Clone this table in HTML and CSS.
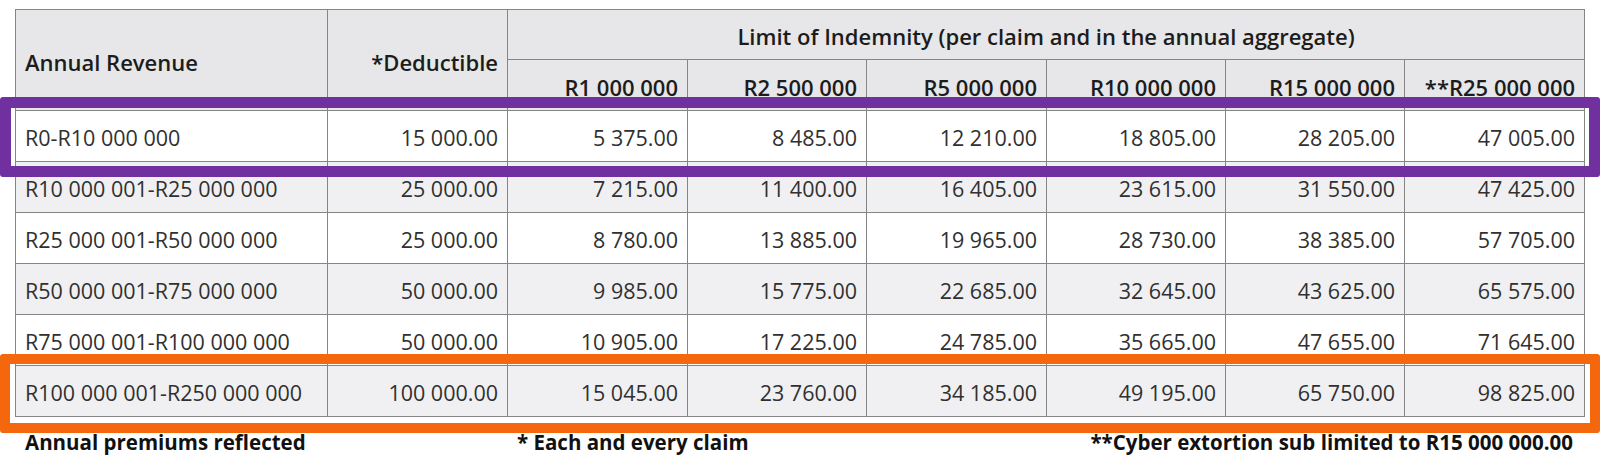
FILE: index.html
```html
<!DOCTYPE html>
<html lang="en">
<head>
<meta charset="utf-8">
<title>Cyber premiums</title>
<link rel="stylesheet" href="styles.css">
</head>
<body>
<div class="page">
  <table class="rates">
    <colgroup>
      <col class="c-rev">
      <col class="c-ded">
      <col class="c-a">
      <col class="c-b">
      <col class="c-a">
      <col class="c-b">
      <col class="c-b">
      <col class="c-a">
    </colgroup>
    <thead>
      <tr class="hr1">
        <th rowspan="2" class="left">Annual Revenue</th>
        <th rowspan="2" class="right">*Deductible</th>
        <th colspan="6" class="center">Limit of Indemnity (per claim and in the annual aggregate)</th>
      </tr>
      <tr class="hr2">
        <th class="right">R1 000 000</th>
        <th class="right">R2 500 000</th>
        <th class="right">R5 000 000</th>
        <th class="right">R10 000 000</th>
        <th class="right">R15 000 000</th>
        <th class="right">**R25 000 000</th>
      </tr>
    </thead>
    <tbody>
      <tr class="odd"><td>R0-R10 000 000</td><td>15 000.00</td><td>5 375.00</td><td>8 485.00</td><td>12 210.00</td><td>18 805.00</td><td>28 205.00</td><td>47 005.00</td></tr>
      <tr class="even"><td>R10 000 001-R25 000 000</td><td>25 000.00</td><td>7 215.00</td><td>11 400.00</td><td>16 405.00</td><td>23 615.00</td><td>31 550.00</td><td>47 425.00</td></tr>
      <tr class="odd"><td>R25 000 001-R50 000 000</td><td>25 000.00</td><td>8 780.00</td><td>13 885.00</td><td>19 965.00</td><td>28 730.00</td><td>38 385.00</td><td>57 705.00</td></tr>
      <tr class="even"><td>R50 000 001-R75 000 000</td><td>50 000.00</td><td>9 985.00</td><td>15 775.00</td><td>22 685.00</td><td>32 645.00</td><td>43 625.00</td><td>65 575.00</td></tr>
      <tr class="odd"><td>R75 000 001-R100 000 000</td><td>50 000.00</td><td>10 905.00</td><td>17 225.00</td><td>24 785.00</td><td>35 665.00</td><td>47 655.00</td><td>71 645.00</td></tr>
      <tr class="even"><td>R100 000 001-R250 000 000</td><td>100 000.00</td><td>15 045.00</td><td>23 760.00</td><td>34 185.00</td><td>49 195.00</td><td>65 750.00</td><td>98 825.00</td></tr>
    </tbody>
  </table>
  <div class="notes">
    <span class="note">Annual premiums reflected</span>
    <span class="note">* Each and every claim</span>
    <span class="note note-right">**Cyber extortion sub limited to R15 000 000.00</span>
  </div>
  <div class="mark mark-purple"></div>
  <div class="mark mark-orange"></div>
</div>
</body>
</html>
```
FILE: styles.css
```css
html, body {
  margin: 0;
  padding: 0;
  background: #ffffff;
}

.page {
  position: relative;
  width: 1600px;
  height: 463px;
  box-sizing: border-box;
  padding: 9px 17px 0 15px;
  font-family: "Open Sans", "Noto Sans", sans-serif;
  color: #303030;
  overflow: hidden;
}

.rates {
  border-collapse: collapse;
  table-layout: fixed;
  width: 1568px;
  font-size: 21.5px;
}

.c-rev { width: 312px; }
.c-ded { width: 180px; }
.c-a { width: 180px; }
.c-b { width: 179px; }

.rates th,
.rates td {
  border: 1px solid #858585;
  padding: 3px 9px 0;
  white-space: nowrap;
  line-height: 1;
}

.rates th {
  background: #e7e7e9;
  color: #1c1c1c;
  font-weight: 600;
  font-size: 22px;
}

.rates th.left { text-align: left; }
.rates th.right { text-align: right; }
.rates th.center { text-align: center; }

.hr1 { height: 50px; }
.hr2 { height: 51px; }
.rates tbody tr { height: 51px; }

.rates td { text-align: right; }
.rates td:first-child { text-align: left; }

.rates tr.odd td { background: #ffffff; }
.rates tr.even td { background: #f0f0f2; }

.notes {
  display: grid;
  grid-template-columns: 492px 359px 1fr;
  width: 1568px;
  margin-top: 15px;
  font-size: 20.5px;
  font-weight: 700;
  color: #111111;
  line-height: 1;
}

.note { padding: 0 10px; }
.note-right { text-align: right; }

.mark {
  position: absolute;
  left: 0;
  width: 1600px;
  box-sizing: border-box;
  border-radius: 3px;
  pointer-events: none;
}

.mark-purple {
  top: 97px;
  height: 80px;
  border: 11px solid #7030a0;
}

.mark-orange {
  top: 354px;
  height: 79px;
  border: 10px solid #f5670c;
}
```
